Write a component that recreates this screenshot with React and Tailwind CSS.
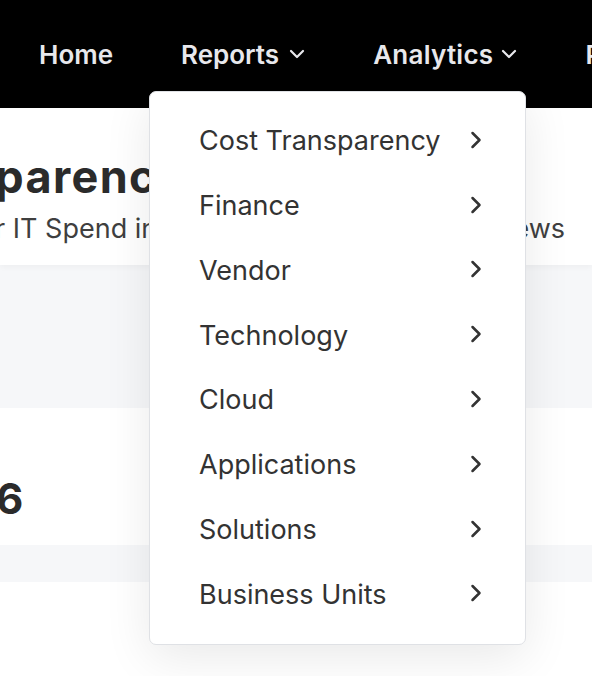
const ITEMS = [
  'Cost Transparency',
  'Finance',
  'Vendor',
  'Technology',
  'Cloud',
  'Applications',
  'Solutions',
  'Business Units',
]

const Caret = () => (
  <svg width="16" height="10" viewBox="0 0 16 10" fill="none" className="mt-[-2px]">
    <path d="M2 2 L8 8 L14 2" stroke="currentColor" strokeWidth="2.2" strokeLinecap="round" strokeLinejoin="round" />
  </svg>
)

const Arrow = () => (
  <svg width="12" height="18" viewBox="0 0 12 18" fill="none" className="mt-[-3px]">
    <path d="M2.5 2 L9.5 9 L2.5 16" stroke="#333333" strokeWidth="2.5" strokeLinecap="round" strokeLinejoin="round" />
  </svg>
)

export default function App() {
  return (
    <div className="relative w-[592px] h-[676px] overflow-hidden bg-white" style={{ fontFamily: 'Inter, "Noto Sans", sans-serif' }}>
      {/* Top nav */}
      <header className="h-[108px] bg-black flex items-center pt-[1px] pl-[39px] gap-[68px] whitespace-nowrap">
        <span className="text-[26px] font-semibold text-[#e8e8ec]">Home</span>
        <span className="flex items-center gap-[10px] text-[26px] font-semibold text-[#e8e8ec]">
          Reports <Caret />
        </span>
        <span className="flex items-center gap-[8px] text-[26px] font-semibold tracking-[0.01em] text-[#e8e8ec]">
          Analytics <Caret />
        </span>
        <span className="text-[26px] font-semibold text-[#e8e8ec]">Portfolio</span>
      </header>

      {/* Page content behind the menu */}
      <div className="bg-[#f6f7f9]">
        <section className="h-[157px] bg-white shadow-[0_2px_6px_rgba(0,0,0,0.04)] pt-[41px] whitespace-nowrap">
          <h1 className="-ml-[256px] text-[45px] leading-[56px] font-bold tracking-[0.03em] text-[#2b2b2b]">Cost Transparency</h1>
          <p className="mt-[7px] w-[565px] flex justify-between text-[27px] leading-[34px] text-[#3f3f3f]">
            <span className="-ml-[155px]">Explore your IT Spend in</span>
            <span>with overviews</span>
          </p>
        </section>
        <div className="h-[143px]" />
        <section className="h-[137px] bg-white pt-[66px] whitespace-nowrap">
          <div className="-ml-[60px] text-[42px] leading-[50px] font-bold text-[#2b2b2b]">$46</div>
        </section>
        <div className="h-[37px]" />
        <section className="h-[94px] bg-white" />
      </div>

      {/* Reports dropdown */}
      <div className="absolute left-[149px] top-[91px] w-[377px] rounded-[7px] border border-[#dfe1e5] bg-white py-[17px] shadow-[0_12px_48px_rgba(0,0,0,0.09)]">
        {ITEMS.map(item => (
          <div key={item} className="h-[64.8px] flex items-center justify-between pl-[49px] pr-[43px]">
            <span className="text-[27px] text-[#333333]">{item}</span>
            <Arrow />
          </div>
        ))}
      </div>
    </div>
  )
}
